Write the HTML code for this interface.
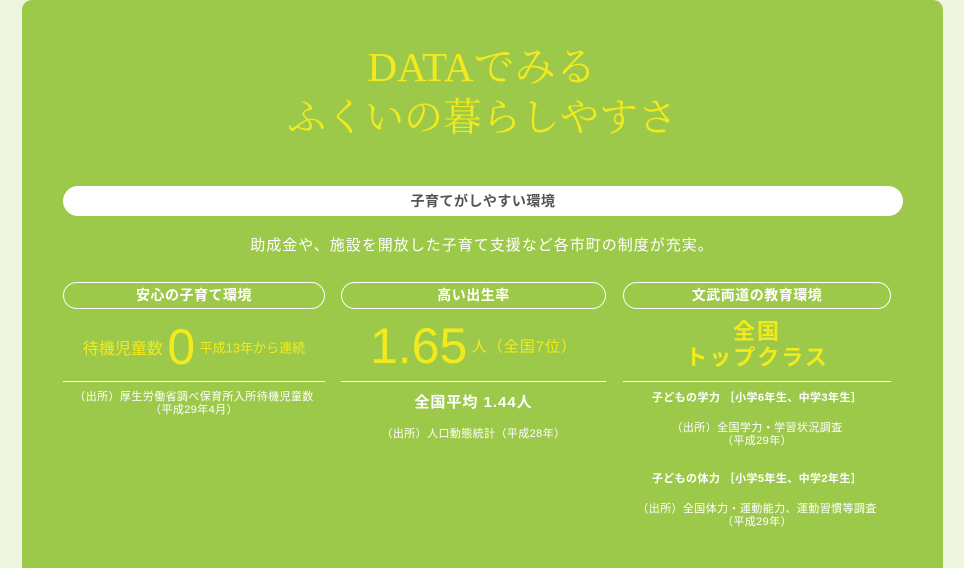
<!DOCTYPE html>
<html style="width:964px;height:568px;overflow:hidden"><head><meta charset="utf-8"><style>
*{margin:0;padding:0;box-sizing:border-box}
body{width:964px;height:568px;background:#eef5df;font-family:"Liberation Sans","Noto Sans CJK JP",sans-serif;overflow:hidden;position:relative}
.panel{position:absolute;left:22px;top:0;width:921px;height:568px;background:#9dc94b;border-radius:10px 10px 0 0}
.t{position:absolute;left:0;width:964px;text-align:center;color:#f2ea1d;font-family:"Liberation Serif","Noto Serif CJK JP",serif;white-space:nowrap}
.ab{position:absolute;white-space:nowrap}
.pill{position:absolute;border:1px solid #fff;border-radius:14px;color:#fff;font-weight:bold;font-size:14px;text-align:center;line-height:25px;height:27px;letter-spacing:0.5px}
.line{position:absolute;top:381px;height:1px;background:#fff}
.c{text-align:center;color:#fff;letter-spacing:0.4px}
</style></head><body>
<div class="panel"></div>
<div class="t" style="top:42px;font-size:41px;line-height:50px">DATAでみる</div>
<div class="t" style="top:94px;font-size:39px;line-height:50px">ふくいの暮らしやすさ</div>
<div class="ab" style="left:63px;top:186px;width:840px;height:30px;background:#fff;border-radius:15px;text-align:center;line-height:30px;font-size:14px;font-weight:bold;color:#555;letter-spacing:0.5px">子育てがしやすい環境</div>
<div class="ab c" style="left:0;width:964px;top:236px;font-size:15px;line-height:20px;letter-spacing:1px">助成金や、施設を開放した子育て支援など各市町の制度が充実。</div>
<div class="pill" style="left:63px;top:282px;width:262px">安心の子育て環境</div>
<div class="pill" style="left:341px;top:282px;width:265px">高い出生率</div>
<div class="pill" style="left:623px;top:282px;width:268px">文武両道の教育環境</div>
<div class="ab" style="left:63px;width:262px;top:322px;text-align:center;color:#f2ea1d">
<span style="font-size:16px;vertical-align:middle">待機児童数</span>
<span style="font-size:50px;line-height:50px;vertical-align:middle">0</span>
<span style="font-size:13px;vertical-align:middle">平成13年から連続</span></div>
<div class="ab" style="left:341px;width:265px;top:318px;text-align:center;color:#f2ea1d">
<span style="font-size:50px;line-height:56px;vertical-align:middle">1.65</span>
<span style="font-size:15px;vertical-align:middle;letter-spacing:1px">人（全国7位）</span></div>
<div class="ab" style="left:623px;width:268px;top:319px;text-align:center;color:#f2ea1d;font-weight:bold;font-size:22px;line-height:26px;letter-spacing:2px">全国<br>トップクラス</div>
<div class="line" style="left:63px;width:262px"></div>
<div class="line" style="left:341px;width:265px"></div>
<div class="line" style="left:623px;width:268px"></div>
<div class="ab c" style="left:63px;width:262px;top:391px;font-size:11px;line-height:13px">（出所）厚生労働省調べ保育所入所待機児童数<br>（平成29年4月）</div>
<div class="ab c" style="left:341px;width:265px;top:393px;font-size:15px;font-weight:bold;line-height:20px;letter-spacing:1px">全国平均 1.44人</div>
<div class="ab c" style="left:341px;width:265px;top:427px;font-size:11px;line-height:14px">（出所）人口動態統計（平成28年）</div>
<div class="ab c" style="left:623px;width:268px;top:391px;font-size:11px;font-weight:bold;line-height:14px">子どもの学力 ［小学6年生、中学3年生］</div>
<div class="ab c" style="left:623px;width:268px;top:422px;font-size:11px;line-height:13px">（出所）全国学力・学習状況調査<br>（平成29年）</div>
<div class="ab c" style="left:623px;width:268px;top:472px;font-size:11px;font-weight:bold;line-height:14px">子どもの体力 ［小学5年生、中学2年生］</div>
<div class="ab c" style="left:623px;width:268px;top:503px;font-size:11px;line-height:13px">（出所）全国体力・運動能力、運動習慣等調査<br>（平成29年）</div>
</body></html>
